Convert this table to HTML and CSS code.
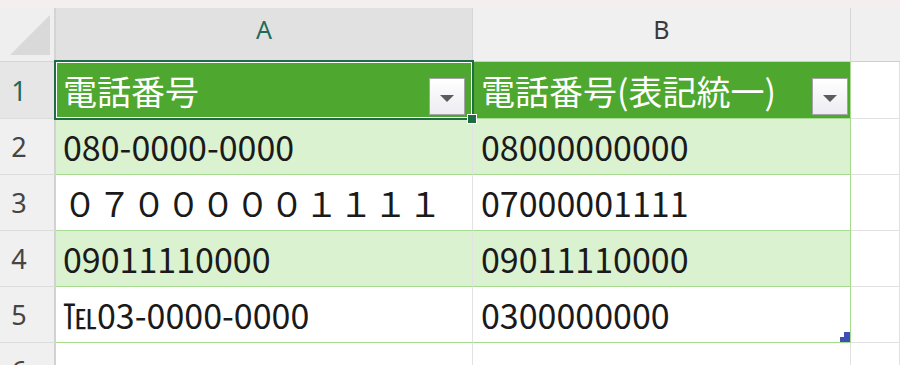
FILE: index.html
```html
<!DOCTYPE html>
<html lang="ja">
<head>
<meta charset="utf-8">
<title>電話番号</title>
<link rel="stylesheet" href="styles.css">
</head>
<body>
<div class="topbar"></div>
<div class="sheet">
  <div class="corner">
    <svg class="corner-tri" width="44" height="44" viewBox="0 0 44 44"><polygon points="42,2 42,42 2,42" fill="#d9d9d9"/></svg>
  </div>
  <div class="colhead selcol">A</div>
  <div class="colhead">B</div>
  <div class="colhead rest"></div>

  <div class="rowhead selrow">1</div>
  <div class="cell th a">電話番号<span class="dd dd-a"><span class="tri"></span></span><span class="selbox"></span><span class="handle"></span></div>
  <div class="cell th b">電話番号(表記統一)<span class="dd dd-b"><span class="tri"></span></span></div>
  <div class="cell empty"></div>

  <div class="rowhead">2</div>
  <div class="cell band a">080-0000-0000</div>
  <div class="cell band b">08000000000</div>
  <div class="cell empty"></div>

  <div class="rowhead">3</div>
  <div class="cell plain a wide">０７０００００１１１１</div>
  <div class="cell plain b">07000001111</div>
  <div class="cell empty"></div>

  <div class="rowhead">4</div>
  <div class="cell band a">09011110000</div>
  <div class="cell band b">09011110000</div>
  <div class="cell empty"></div>

  <div class="rowhead">5</div>
  <div class="cell plain a">℡03-0000-0000</div>
  <div class="cell plain b">0300000000<svg class="resize" width="10" height="10" viewBox="0 0 10 10"><polygon points="4,0 10,0 10,10 0,10 0,5 4,5" fill="#3f4fb8"/></svg></div>
  <div class="cell empty"></div>

  <div class="rowhead">6</div>
  <div class="cell blank"></div>
  <div class="cell blank"></div>
  <div class="cell empty"></div>
</div>
</body>
</html>
```
FILE: styles.css
```css
html, body {
  margin: 0;
  padding: 0;
  background: #ffffff;
  overflow: hidden;
}
body {
  width: 900px;
  height: 365px;
  font-family: "Noto Sans CJK JP", "Noto Sans", sans-serif;
}
.topbar {
  height: 8px;
  background: #f4eeee;
}
.sheet {
  display: grid;
  grid-template-columns: 56px 417px 378px 1fr;
  grid-template-rows: 54px 57px 56px 56px 56px 56px 56px;
}
.corner {
  background: #efefef;
  border-right: 2px solid #d4d4d4;
  border-bottom: 1px solid #d4d4d4;
  box-sizing: border-box;
  display: flex;
  align-items: flex-end;
  justify-content: flex-end;
  padding: 0 2px 4px 0;
}
.corner-tri { display: block; }
.colhead {
  background: #f0f0f0;
  border-right: 1px solid #d6d6d6;
  border-bottom: 1px solid #cfcfcf;
  box-sizing: border-box;
  display: flex;
  align-items: center;
  justify-content: center;
  padding-bottom: 12px;
  font-family: "Noto Sans", "Liberation Sans", sans-serif;
  font-size: 25px;
  color: #3a3a3a;
}
.colhead.selcol {
  background: #e1e1e1;
  color: #1d6b5a;
}
.colhead.rest { border-right: none; }
.rowhead {
  background: #f0f0f0;
  border-right: 2px solid #d2d2d2;
  border-bottom: 1px solid #dcdcdc;
  box-sizing: border-box;
  display: flex;
  align-items: center;
  justify-content: center;
  padding-right: 16px;
  font-family: "Noto Sans", "Liberation Sans", sans-serif;
  font-size: 27px;
  color: #454545;
}
.rowhead.selrow {
  background: #e6e6e6;
  color: #1d6b5a;
}
.cell {
  position: relative;
  box-sizing: border-box;
  display: flex;
  align-items: center;
  font-size: 34px;
  color: #1a1a1a;
  white-space: nowrap;
  border-right: 1px solid #e2e2e2;
  border-bottom: 1px solid #e2e2e2;
}
.cell.a { padding-left: 7px; }
.cell.b { padding-left: 8px; }
.cell.th {
  background: #4ea72e;
  color: #ffffff;
  border-bottom: 1px solid #a9dc93;
  border-right: 1px solid #4ea72e;
}
.cell.th.b { border-right: 1px solid #a9dc93; }
.cell.band {
  background: #daf2d0;
  border-bottom: 1px solid #a6db8f;
}
.cell.plain {
  background: #ffffff;
  border-bottom: 1px solid #a6db8f;
}
.cell.band.b, .cell.plain.b { border-right: 1px solid #a6db8f; }
.cell.wide { letter-spacing: 0.5px; }
.cell.empty { background: #ffffff; }
.cell.blank { background: #ffffff; }

.dd {
  position: absolute;
  bottom: 3px;
  width: 36px;
  height: 37px;
  box-sizing: border-box;
  border: 1px solid #a3a3a8;
  background: linear-gradient(#ffffff, #ececf2);
  display: flex;
  align-items: center;
  justify-content: center;
  padding-top: 4px;
}
.dd-a { right: 7px; }
.dd-b { right: 2px; }
.tri {
  width: 0;
  height: 0;
  border-left: 7px solid transparent;
  border-right: 7px solid transparent;
  border-top: 7px solid #5c5c5c;
}
.selbox {
  position: absolute;
  z-index: 3;
  left: -2px;
  top: -2px;
  right: -2px;
  bottom: -2px;
  border: 2px solid #1f6b43;
  box-shadow: inset 0 0 0 1px #ffffff;
  pointer-events: none;
}
.handle {
  position: absolute;
  z-index: 4;
  right: -5px;
  bottom: -6px;
  width: 8px;
  height: 8px;
  background: #1f6b43;
  border: 1px solid #ffffff;
}
.resize {
  position: absolute;
  right: 0px;
  bottom: 0px;
}
```
